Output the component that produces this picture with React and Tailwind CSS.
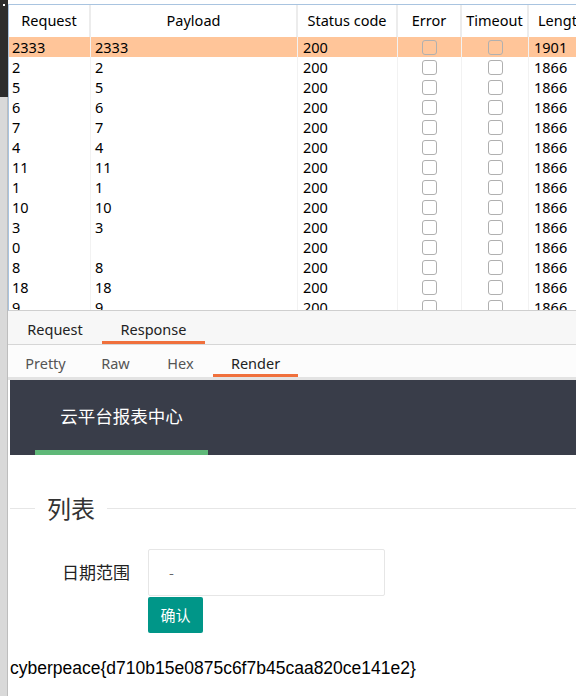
import React from "react";

const rows = [
  ["2333", "2333", "200", "1901"],
  ["2", "2", "200", "1866"],
  ["5", "5", "200", "1866"],
  ["6", "6", "200", "1866"],
  ["7", "7", "200", "1866"],
  ["4", "4", "200", "1866"],
  ["11", "11", "200", "1866"],
  ["1", "1", "200", "1866"],
  ["10", "10", "200", "1866"],
  ["3", "3", "200", "1866"],
  ["0", "", "200", "1866"],
  ["8", "8", "200", "1866"],
  ["18", "18", "200", "1866"],
  ["9", "9", "200", "1866"],
];

const ui = { fontFamily: '"Noto Sans", "Open Sans", sans-serif' };
const cjk = { fontFamily: '"Noto Sans CJK SC", "Noto Sans", sans-serif' };

function Box() {
  return <div className="h-[15px] w-[15px] rounded-[3px] border border-[#b0b0b0]" />;
}

function Head({ w, children }) {
  return (
    <div className={`${w} flex shrink-0 items-center justify-center border-r-2 border-[#ececec]`}>
      {children}
    </div>
  );
}

export default function App() {
  return (
    <div className="flex h-[696px] w-[576px] overflow-hidden bg-white text-[14.5px] text-black" style={ui}>
      <div className="flex w-[8px] shrink-0 flex-col">
        <div className="relative h-[97px] bg-[#2d2d2d]">
          <div className="absolute left-[3px] top-[4px] h-[2px] w-[2px] bg-white" />
        </div>
        <div className="flex-1 border-r border-[#bdbdbd] bg-[#d9d9d9]" />
      </div>

      <div className="flex min-w-0 flex-1 flex-col">
        <div className="h-[4px] shrink-0 bg-white" />

        <div className="h-[307px] shrink-0 overflow-hidden border-l border-t border-b border-[#a9c4e0] border-b-[#cfcfcf]">
          <div className="flex h-[32px] w-[640px]">
            <Head w="w-[82px]">Request</Head>
            <Head w="w-[207px]">Payload</Head>
            <Head w="w-[100px]">Status code</Head>
            <Head w="w-[64px]">Error</Head>
            <Head w="w-[67px]">Timeout</Head>
            <div className="flex w-[80px] shrink-0 items-center pl-[9px]">Length</div>
          </div>
          {rows.map((r, i) => (
            <div
              key={i}
              className={`flex h-[20px] w-[640px] items-center ${i === 0 ? "bg-[#ffc599]" : ""}`}
            >
              <div className="w-[82px] shrink-0 border-r border-[#f2f2f2] pl-[3px] leading-[20px]">{r[0]}</div>
              <div className="w-[207px] shrink-0 border-r border-[#f2f2f2] pl-[4px] leading-[20px]">{r[1] || "\u00a0"}</div>
              <div className="w-[100px] shrink-0 border-r border-[#f2f2f2] pl-[5px] leading-[20px]">{r[2]}</div>
              <div className="flex h-[20px] w-[64px] shrink-0 items-center justify-center border-r border-[#f2f2f2]">
                <Box />
              </div>
              <div className="flex h-[20px] w-[67px] shrink-0 items-center justify-center border-r border-[#f2f2f2]">
                <Box />
              </div>
              <div className="w-[80px] shrink-0 pl-[5px] leading-[20px]">{r[3]}</div>
            </div>
          ))}
        </div>

        <div className="flex h-[34px] shrink-0 items-end border-b border-[#d6d6d6] bg-[#f7f7f7]">
          <div className="flex h-[28px] w-[94px] items-center justify-center pb-[3px] pt-[3px] text-[#222]">Request</div>
          <div className="flex h-[28px] w-[103px] items-center justify-center border-b-[3px] border-[#f0703c] pt-[3px] text-[#222]">
            Response
          </div>
        </div>

        <div className="flex h-[35px] shrink-0 items-end border-b-[3px] border-[#e3e3e3] bg-[#fcfcfc]">
          <div className="flex h-[29px] w-[75px] items-center justify-center pb-[3px] pt-[6px] text-[#555]">Pretty</div>
          <div className="flex h-[29px] w-[65px] items-center justify-center pb-[3px] pt-[6px] text-[#555]">Raw</div>
          <div className="flex h-[29px] w-[65px] items-center justify-center pb-[3px] pt-[6px] text-[#555]">Hex</div>
          <div className="flex h-[29px] w-[85px] items-center justify-center border-b-[3px] border-[#f0703c] pt-[6px] text-[#222]">
            Render
          </div>
        </div>

        <div className="flex flex-1 flex-col pl-[2px]" style={cjk}>
          <div className="flex h-[75px] shrink-0 items-end bg-[#393d49] pl-[25px]">
            <div className="flex h-full w-[173px] flex-col">
              <div className="flex flex-1 items-center justify-center pt-[3px] text-[17.5px] text-white">
                云平台报表中心
              </div>
              <div className="h-[5px] bg-[#5fb878]" />
            </div>
          </div>

          <div className="mt-[39px] flex items-center">
            <div className="h-px w-[25px] bg-[#e6e6e6]" />
            <div className="px-[12px] text-[24px] leading-[28px] text-[#333]">列表</div>
            <div className="h-px flex-1 bg-[#e6e6e6]" />
          </div>

          <div className="mt-[27px] flex items-start">
            <div className="flex h-[46px] w-[138px] items-center justify-end pr-[18px] text-[17px] text-[#222]">
              日期范围
            </div>
            <div className="flex flex-col">
              <div className="flex h-[47px] w-[237px] items-center rounded-[2px] border border-[#e6e6e6] pl-[20px] text-[14px] text-[#666]">
                -
              </div>
              <div className="mt-px flex h-[36px] w-[55px] items-center justify-center rounded-[2px] bg-[#009688] text-[15px] text-white">
                确认
              </div>
            </div>
          </div>

          <div
            className="mt-[24px] text-[17.5px] leading-[22px] text-black"
            style={{ fontFamily: '"Liberation Sans", Arial, sans-serif' }}
          >
            cyberpeace{"{"}d710b15e0875c6f7b45caa820ce141e2{"}"}
          </div>
        </div>
      </div>
    </div>
  );
}
